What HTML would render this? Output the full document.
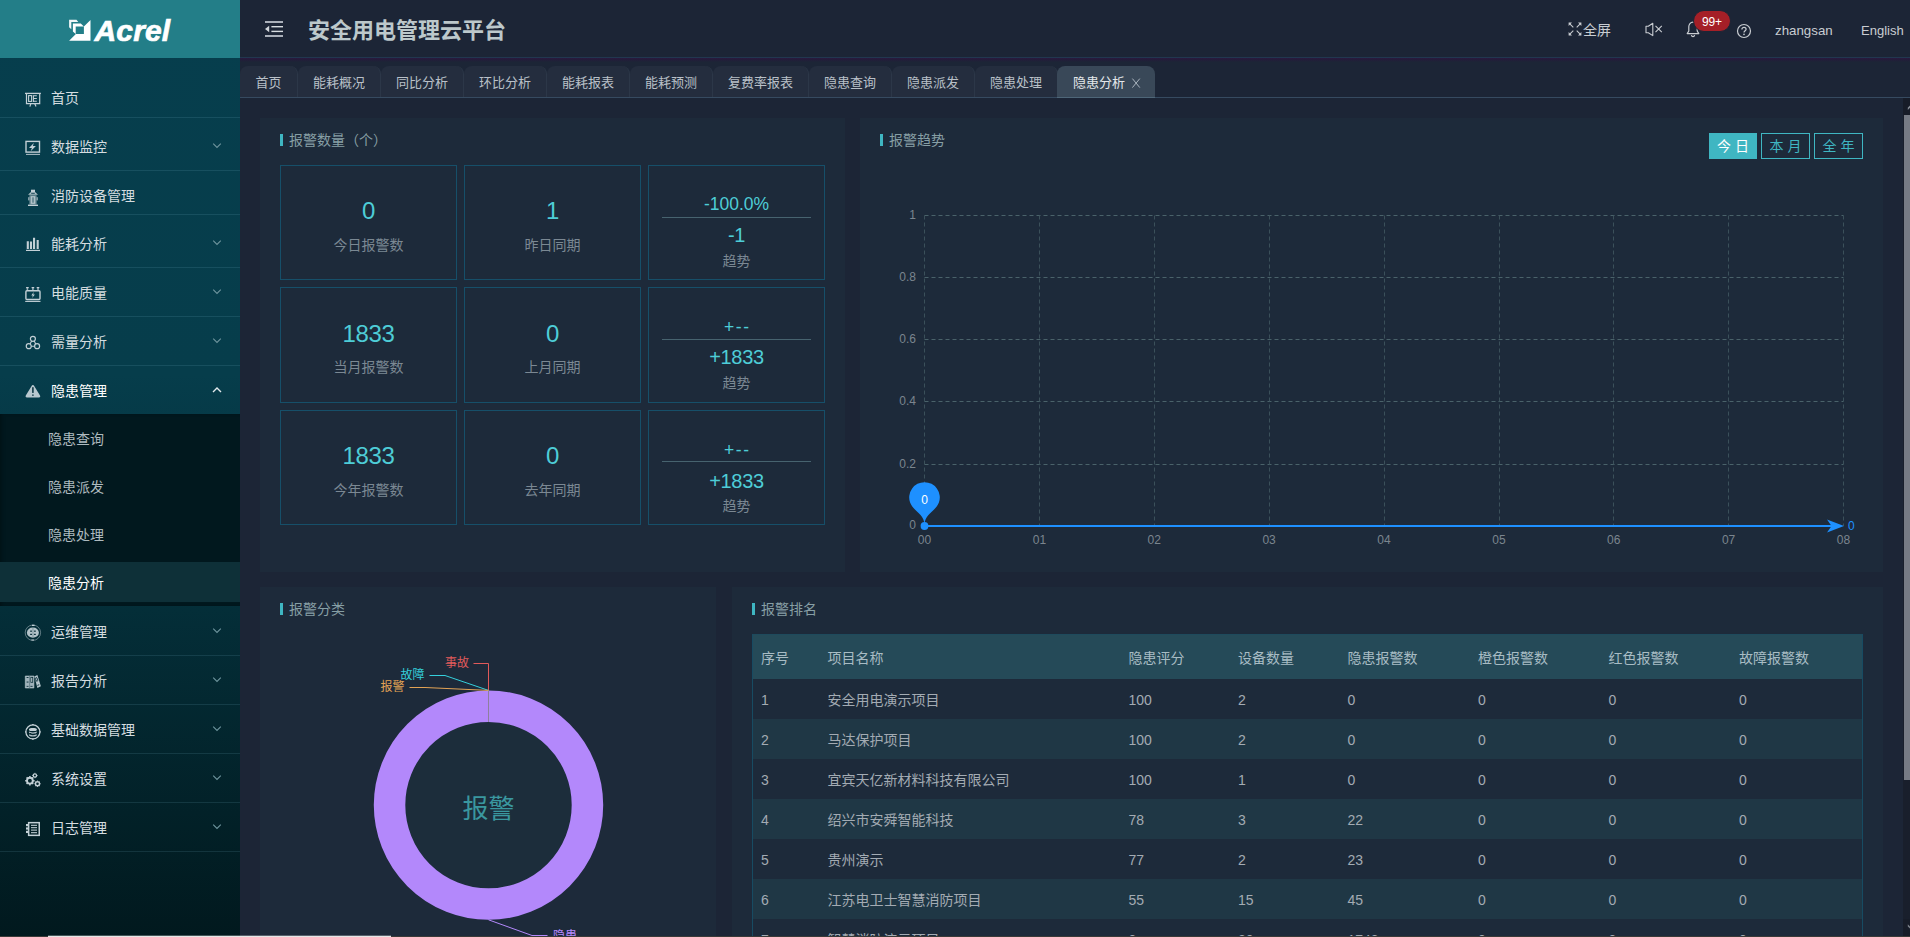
<!DOCTYPE html>
<html lang="zh-CN">
<head>
<meta charset="utf-8">
<title>安全用电管理云平台</title>
<style>
*{box-sizing:border-box;margin:0;padding:0}
html,body{width:1910px;height:937px;overflow:hidden;background:#1c2536}
body{position:relative;font-family:"Liberation Sans","Noto Sans CJK SC",sans-serif;font-size:14px;color:#c9ced4}
.abs{position:absolute}
svg{display:block}
#side{position:absolute;left:0;top:0;width:240px;height:937px;background:linear-gradient(#063e4d 0%,#063d4b 40%,#01191e 100%);overflow:hidden}
#logo{position:absolute;left:0;top:0;width:240px;height:58px;background:#237e88}
#logo .t{position:absolute;left:94.6px;top:13px;font:italic bold 30px/36px "Liberation Sans",sans-serif;color:#fff;letter-spacing:.1px;-webkit-text-stroke:.7px #fff}
.mi{position:absolute;left:0;width:240px;height:48px;line-height:48px;color:#d5dde0;font-size:14px;white-space:nowrap}
.mi .tx{position:absolute;left:51px;top:0}
.mi svg.ic{position:absolute;left:24px;top:15px;width:18px;height:18px}
.mi svg.ar{position:absolute;left:212px;top:20px;width:10px;height:7px}
.mi.on{color:#fff}
.ln{position:absolute;left:0;width:240px;height:1px;background:rgba(130,190,210,.14)}
#sub{position:absolute;left:0;top:414px;width:240px;height:192px;background:#01181e;box-shadow:inset 3px 0 4px -2px rgba(0,0,0,.35)}
.si{position:absolute;left:0;width:240px;padding-left:48px;height:48px;line-height:48px;color:#aebabf;font-size:14px}
#hd{position:absolute;left:240px;top:0;width:1670px;height:57px;background:#1c2536}
#hdl{position:absolute;left:240px;top:57px;width:1670px;height:1px;background:#21374f}
#hds{position:absolute;left:240px;top:58px;width:1670px;height:4px;background:linear-gradient(#2a1a40 0,#241b3a 35%,#1c2536 100%)}
#title{position:absolute;left:308px;top:14.5px;font-weight:bold;font-size:22px;line-height:32px;color:#bcc8cb;white-space:nowrap}
.hr{position:absolute;top:20px;line-height:20px;font-size:13px;color:#c9cdd2;white-space:nowrap}
.tab{position:absolute;top:66px;height:31px;line-height:34px;font-size:13px;color:#b9c0c8;background:#242d3e;border-radius:8px 8px 0 0;text-align:center;white-space:nowrap;border-right:1px solid #2c3748}
.tab.on{background:#394858;color:#e3e7ea;border-right:none;text-align:left;padding-left:16px}
#tabl{position:absolute;left:240px;top:97px;width:1670px;height:1px;background:#364a60}
.card{position:absolute;background:#1d2a3a}
.ct{position:absolute;font-size:14px;line-height:20px;color:#879fa5;white-space:nowrap;padding-left:9px}
.ct:before{content:"";position:absolute;left:0;top:4px;width:3px;height:12px;background:#3fb6c2}
.box{position:absolute;width:177px;height:115px;border:1px solid #164f69}
.num{position:absolute;left:0;width:100%;text-align:center;color:#4ecdd7;white-space:nowrap}
.lab{position:absolute;left:0;width:100%;text-align:center;color:#7b8893;font-size:14px;line-height:20px;white-space:nowrap}
.hl{position:absolute;left:13px;right:13px;height:1px;background:#47636f}
.btn{position:absolute;top:133px;height:26px;line-height:24px;border:1px solid #3fb6c2;color:#3fb6c2;font-size:14px;text-align:center;white-space:nowrap}
.btn.on{background:#3fb6c2;color:#fff}
#tb{position:absolute;left:752px;top:634px;width:1111px;height:303px;border-left:1px solid #174b62;border-right:1px solid #174b62;border-top:1px solid #1e4a5c;overflow:hidden}
.tr{position:absolute;left:0;width:1109px;height:40px;line-height:41px;color:#a3abb3;font-size:14px}
.tr.h{height:44px;line-height:46px;background:#254a58;color:#a8bcc4}
.tr.e{background:#1f3745}
.tr span{position:absolute;top:.6px;white-space:nowrap}
.tr.h span{top:-.4px}
</style>
</head>
<body>
<div id="side">
<div id="logo"><svg class="abs" style="left:69px;top:19px" width="22" height="23" viewBox="0 0 22 23"><path d="M0.1 0.7H7.5L9.3 2.9H2.3V10.3L0.1 8.3Z" fill="#fff" opacity=".93"/><path d="M3.9 4.5H11.8L14.9 7.4H6.7V14.9L3.9 12.4Z" fill="#fff"/><path d="M21.5 1V21.8H0.1L6.9 14.9H14.9V7.4Z" fill="#fff"/></svg><div class="t">Acrel</div></div>
<svg class="abs" style="left:24px;top:90px" width="18" height="19" viewBox="0 0 18 19"><path d="M1 3.4H16.9" stroke="#c3d0d6" stroke-width="1.3"/><path d="M2.5 3.4V13.6H15.7V3.4" fill="none" stroke="#c3d0d6" stroke-width="1.2"/><rect x="4.6" y="5.6" width="3" height="5.8" fill="none" stroke="#c3d0d6" stroke-width="1.1"/><path d="M9.4 5.2V11.9M9.4 5.7H12.8M9.4 8.5H12.8M9.4 11.3H12.8" stroke="#c3d0d6" stroke-width="1.1" fill="none"/><path d="M6.8 13.6L5.9 16.6M10.7 13.6L12 16.6" stroke="#c3d0d6" stroke-width="1.2"/></svg><div class="mi" style="top:74.2px"><span class="tx">首页</span></div>
<svg class="abs" style="left:24px;top:139px" width="18" height="19" viewBox="0 0 18 19"><rect x="2" y="2.4" width="13.5" height="10.7" fill="none" stroke="#c3d0d6" stroke-width="1.4"/><path d="M2 15.4H16" stroke="#c3d0d6" stroke-width="1.1" opacity=".85"/><path d="M9.8 3.9L5 8.9H7.9L6.7 12.3L11.9 7H8.9Z" fill="#c3d0d6"/></svg><div class="mi" style="top:122.9px"><span class="tx">数据监控</span></div><svg class="abs" style="left:212px;top:142px" width="10" height="8" viewBox="0 0 10 8"><path d="M1.2 1.6L5 5.4L8.8 1.6" fill="none" stroke="#6f959e" stroke-width="1.1"/></svg>
<svg class="abs" style="left:24px;top:188px" width="18" height="19" viewBox="0 0 18 19"><path d="M7 1.7H11V4H7Z" fill="#c3d0d6"/><path d="M4 6.8L7.2 3.7H10.8L14 6.8Z" fill="#c3d0d6" opacity=".9"/><path d="M7.2 5.3H10.8" stroke="#06384a" stroke-width="0.9"/><rect x="5.4" y="7.2" width="7.2" height="9.3" fill="#c3d0d6" opacity=".55"/><rect x="7.3" y="8.8" width="3.4" height="6.4" fill="none" stroke="#c3d0d6" stroke-width="0.9"/><rect x="4" y="16.6" width="10" height="1.4" fill="#c3d0d6"/><rect x="4.2" y="9.2" width="1.2" height="3.2" fill="#c3d0d6" opacity=".8"/><rect x="12.6" y="9.2" width="1.2" height="3.2" fill="#c3d0d6" opacity=".8"/></svg><div class="mi" style="top:171.8px"><span class="tx">消防设备管理</span></div>
<svg class="abs" style="left:24px;top:235px" width="18" height="19" viewBox="0 0 18 19"><path d="M3.8 6.2V14M7 6.4V14M10.05 2.8V14M13.7 5.1V14" stroke="#c3d0d6" stroke-width="2.1" fill="none"/><path d="M2 15.4H16" stroke="#c3d0d6" stroke-width="1.2"/></svg><div class="mi" style="top:219.8px"><span class="tx">能耗分析</span></div><svg class="abs" style="left:212px;top:239px" width="10" height="8" viewBox="0 0 10 8"><path d="M1.2 1.6L5 5.4L8.8 1.6" fill="none" stroke="#6f959e" stroke-width="1.1"/></svg>
<svg class="abs" style="left:24px;top:284px" width="18" height="19" viewBox="0 0 18 19"><rect x="1.9" y="6.8" width="14.1" height="8.7" rx="1" fill="none" stroke="#c3d0d6" stroke-width="1.4"/><path d="M3.4 3.6V6.4M8.9 3.6V6.4M14 3.6V6.4" stroke="#c3d0d6" stroke-width="1.5" opacity=".75"/><path d="M2.1 3.6H4.7M7.6 3.6H10.2M12.7 3.6H15.3" stroke="#c3d0d6" stroke-width="1.1"/><path d="M1.2 17.4H16.5" stroke="#c3d0d6" stroke-width="1.1"/><path d="M9.7 8.1L7.3 11.4H8.9L8.1 13.9L10.9 10.4H9.2Z" fill="#c3d0d6"/></svg><div class="mi" style="top:268.7px"><span class="tx">电能质量</span></div><svg class="abs" style="left:212px;top:288px" width="10" height="8" viewBox="0 0 10 8"><path d="M1.2 1.6L5 5.4L8.8 1.6" fill="none" stroke="#6f959e" stroke-width="1.1"/></svg>
<svg class="abs" style="left:24px;top:333px" width="18" height="19" viewBox="0 0 18 19"><circle cx="8.9" cy="5.8" r="2.5" fill="none" stroke="#c3d0d6" stroke-width="1.2"/><circle cx="4.75" cy="13.2" r="2.5" fill="none" stroke="#c3d0d6" stroke-width="1.2"/><circle cx="13.1" cy="13.2" r="2.5" fill="none" stroke="#c3d0d6" stroke-width="1.2"/><path d="M7.6 8L6.1 10.9M10.2 8L11.7 10.9M7.3 13.2H10.6" stroke="#c3d0d6" stroke-width="1.1"/></svg><div class="mi" style="top:318.2px"><span class="tx">需量分析</span></div><svg class="abs" style="left:212px;top:337px" width="10" height="8" viewBox="0 0 10 8"><path d="M1.2 1.6L5 5.4L8.8 1.6" fill="none" stroke="#6f959e" stroke-width="1.1"/></svg>
<svg class="abs" style="left:24px;top:382px" width="18" height="19" viewBox="0 0 18 19"><path d="M8.9 3C9.5 3 9.9 3.4 10.2 3.9L16 13.6C16.6 14.6 16 15.6 15 15.6H2.9C1.8 15.6 1.3 14.6 1.8 13.6L7.6 3.9C7.9 3.4 8.3 3 8.9 3Z" fill="#b9c8cf"/><rect x="8.15" y="5.2" width="1.5" height="5.7" fill="#06303d"/><rect x="8.15" y="12.5" width="1.5" height="1.3" fill="#06303d"/></svg><div class="mi on" style="top:367.2px"><span class="tx">隐患管理</span></div><svg class="abs" style="left:212px;top:386px" width="10" height="8" viewBox="0 0 10 8"><path d="M1 6L5 2L9 6" fill="none" stroke="#e3eaed" stroke-width="1.4"/></svg>
<svg class="abs" style="left:24px;top:624px" width="18" height="19" viewBox="0 0 18 19"><circle cx="8.9" cy="8.7" r="7.7" fill="none" stroke="#c3d0d6" stroke-width="0.8" opacity=".6"/><ellipse cx="8.9" cy="8.7" rx="6" ry="5.1" fill="#c3d0d6" opacity=".92"/><path d="M8 1.4H10.6M7.4 16H10" stroke="#c3d0d6" stroke-width="1.2"/><rect x="6.1" y="6.6" width="1.9" height="1.1" fill="#032a35"/><rect x="9.9" y="6.6" width="1.9" height="1.1" fill="#032a35"/><rect x="6.1" y="9.8" width="1.9" height="1.1" fill="#032a35"/><rect x="9.9" y="9.8" width="1.9" height="1.1" fill="#032a35"/><path d="M8.95 4V13.4" stroke="#7d959e" stroke-width="0.9"/></svg><div class="mi" style="top:607.8px"><span class="tx">运维管理</span></div><svg class="abs" style="left:212px;top:627px" width="10" height="8" viewBox="0 0 10 8"><path d="M1.2 1.6L5 5.4L8.8 1.6" fill="none" stroke="#6f959e" stroke-width="1.1"/></svg>
<svg class="abs" style="left:24px;top:672px" width="18" height="19" viewBox="0 0 18 19"><rect x="1.3" y="4" width="8.6" height="12" fill="#9fb2ba"/><path d="M1.3 4H9.9M1.3 4V16M9.9 4V16M1.3 16H9.9" stroke="#c3d0d6" stroke-width="0.7" opacity=".8"/><path d="M5.6 4V16" stroke="#5f7882" stroke-width="0.8"/><rect x="2.6" y="5.1" width="1.9" height="0.9" fill="#032a35"/><rect x="2.6" y="9.6" width="1.9" height="0.9" fill="#032a35"/><rect x="2.6" y="13.9" width="1.9" height="0.8" fill="#032a35"/><rect x="6.4" y="13.9" width="2.2" height="0.8" fill="#032a35"/><rect x="6.9" y="5.3" width="1.8" height="5" fill="#dfe8ec" stroke="#032a35" stroke-width="0.8"/><path d="M10.4 4.6L13.4 3.1L16.9 14.2L13.4 15.9Z" fill="#b5c5cc"/><ellipse cx="12.6" cy="7.4" rx="0.9" ry="2" fill="none" stroke="#032a35" stroke-width="0.8" transform="rotate(-17 12.6 7.4)"/><path d="M13.4 13.4L15.2 12.7" stroke="#032a35" stroke-width="0.9"/></svg><div class="mi" style="top:657.0px"><span class="tx">报告分析</span></div><svg class="abs" style="left:212px;top:676px" width="10" height="8" viewBox="0 0 10 8"><path d="M1.2 1.6L5 5.4L8.8 1.6" fill="none" stroke="#6f959e" stroke-width="1.1"/></svg>
<svg class="abs" style="left:24px;top:723px" width="18" height="19" viewBox="0 0 18 19"><circle cx="8.9" cy="8.9" r="7" fill="none" stroke="#c3d0d6" stroke-width="1.3"/><path d="M8.9 1.1V2.2M8.9 15.6V16.7M1.1 8.9H2.2M15.6 8.9H16.7" stroke="#c3d0d6" stroke-width="1.4"/><path d="M5 6.1C5 4.5 12.8 4.5 12.8 6.1V6.9C12.8 8.5 5 8.5 5 6.9Z" fill="#c3d0d6"/><path d="M5 8.6C6 9.7 11.8 9.7 12.8 8.6V9.6C12.8 11.2 5 11.2 5 9.6Z" fill="#c3d0d6" opacity=".9"/><path d="M5 11.3C6 12.4 11.8 12.4 12.8 11.3V12.2C12.8 13.9 5 13.9 5 12.2Z" fill="#c3d0d6" opacity=".9"/></svg><div class="mi" style="top:706.0px"><span class="tx">基础数据管理</span></div><svg class="abs" style="left:212px;top:725px" width="10" height="8" viewBox="0 0 10 8"><path d="M1.2 1.6L5 5.4L8.8 1.6" fill="none" stroke="#6f959e" stroke-width="1.1"/></svg>
<svg class="abs" style="left:24px;top:771px" width="18" height="19" viewBox="0 0 18 19"><circle cx="5.9" cy="9.7" r="2.9" fill="none" stroke="#c3d0d6" stroke-width="1.9"/><path d="M5.9 5V14.4M1.2 9.7H10.6M2.6 6.4L9.2 13M9.2 6.4L2.6 13" stroke="#c3d0d6" stroke-width="1.5" stroke-dasharray="1.5 6.4"/><circle cx="10.9" cy="4.5" r="1.65" fill="none" stroke="#c3d0d6" stroke-width="1.3"/><path d="M10.9 1.8V7.2M8.2 4.5H13.6" stroke="#c3d0d6" stroke-width="1" stroke-dasharray="0.8 3.8" opacity=".8"/><circle cx="13.5" cy="12.8" r="2" fill="none" stroke="#c3d0d6" stroke-width="1.4"/><path d="M13.5 9.6V16M10.3 12.8H16.7M11.3 10.6L15.7 15M15.7 10.6L11.3 15" stroke="#c3d0d6" stroke-width="1.1" stroke-dasharray="0.9 4.6" opacity=".85"/></svg><div class="mi" style="top:755.0px"><span class="tx">系统设置</span></div><svg class="abs" style="left:212px;top:774px" width="10" height="8" viewBox="0 0 10 8"><path d="M1.2 1.6L5 5.4L8.8 1.6" fill="none" stroke="#6f959e" stroke-width="1.1"/></svg>
<svg class="abs" style="left:24px;top:820px" width="18" height="19" viewBox="0 0 18 19"><rect x="4.65" y="2.65" width="10.6" height="12.7" fill="none" stroke="#c3d0d6" stroke-width="1.5"/><path d="M7 5.4H13M7 7.6H13M7 10.1H13M7 12.6H13" stroke="#c3d0d6" stroke-width="1.1" opacity=".85"/><rect x="2" y="4" width="2" height="2.2" fill="#c3d0d6"/><rect x="2" y="7.4" width="2" height="2.2" fill="#c3d0d6"/><rect x="2" y="10.8" width="2" height="2.2" fill="#c3d0d6"/></svg><div class="mi" style="top:804.2px"><span class="tx">日志管理</span></div><svg class="abs" style="left:212px;top:823px" width="10" height="8" viewBox="0 0 10 8"><path d="M1.2 1.6L5 5.4L8.8 1.6" fill="none" stroke="#6f959e" stroke-width="1.1"/></svg>
<div class="ln" style="top:117px"></div><div class="ln" style="top:170px"></div><div class="ln" style="top:214px"></div><div class="ln" style="top:267px"></div><div class="ln" style="top:316px"></div><div class="ln" style="top:365px"></div><div class="ln" style="top:655px"></div><div class="ln" style="top:704px"></div><div class="ln" style="top:753px"></div><div class="ln" style="top:802px"></div><div class="ln" style="top:851px"></div>
<div id="sub"><div class="abs" style="left:0;top:148px;width:240px;height:40px;background:#0e3038"></div><div class="si" style="top:0.8px">隐患查询</div><div class="si" style="top:48.9px">隐患派发</div><div class="si" style="top:97.0px">隐患处理</div><div class="si" style="top:145.2px;color:#fff">隐患分析</div></div>
</div>
<div id="hd"></div><div id="hdl"></div><div id="hds"></div>
<svg class="abs" style="left:264px;top:20px" width="20" height="18" viewBox="0 0 20 18"><rect x="1" y="1" width="18" height="2" fill="#aab0ba"/><rect x="1" y="15" width="18" height="2" fill="#aab0ba"/><rect x="7.4" y="6" width="11.6" height="1.4" fill="#d7dce1"/><rect x="7.4" y="10.7" width="11.6" height="1.4" fill="#d7dce1"/><path d="M1 9L5.2 5.8V12.2Z" fill="#d0d5da"/></svg><div id="title">安全用电管理云平台</div>
<svg class="abs" style="left:1568px;top:22px" width="14" height="14" viewBox="-7 -7 14 14"><path d="M1.7 1.7L5.2 5.2" stroke="#c9cdd2" stroke-width="1.1"/><path d="M6.4 6.4L6.4 3.0L3.0 6.4Z" fill="#c9cdd2"/><path d="M1.7 -1.7L5.2 -5.2" stroke="#c9cdd2" stroke-width="1.1"/><path d="M6.4 -6.4L6.4 -3.0L3.0 -6.4Z" fill="#c9cdd2"/><path d="M-1.7 1.7L-5.2 5.2" stroke="#c9cdd2" stroke-width="1.1"/><path d="M-6.4 6.4L-6.4 3.0L-3.0 6.4Z" fill="#c9cdd2"/><path d="M-1.7 -1.7L-5.2 -5.2" stroke="#c9cdd2" stroke-width="1.1"/><path d="M-6.4 -6.4L-6.4 -3.0L-3.0 -6.4Z" fill="#c9cdd2"/></svg><div class="hr" style="left:1583px;font-size:14px">全屏</div><svg class="abs" style="left:1645px;top:22px" width="18" height="15" viewBox="1645 22 18 15"><path d="M1646 26.3H1648.3L1652.8 23.3V35.6L1648.3 32.7H1646Z" fill="none" stroke="#c9cdd2" stroke-width="1.1" stroke-linejoin="round"/><path d="M1655.5 25.8L1661.8 32.1M1661.8 25.8L1655.5 32.1" stroke="#c9cdd2" stroke-width="1.1"/></svg><svg class="abs" style="left:1686px;top:21px" width="14" height="17" viewBox="0 0 14 17"><path d="M7 1.2C4.4 1.2 2.8 3.2 2.8 5.8V10L1.2 12.6H12.8L11.2 10V5.8C11.2 3.2 9.6 1.2 7 1.2Z" fill="none" stroke="#c9cdd2" stroke-width="1.2" stroke-linejoin="round"/><path d="M5.4 14.2C5.6 15.2 6.2 15.7 7 15.7S8.4 15.2 8.6 14.2" fill="none" stroke="#c9cdd2" stroke-width="1.2"/></svg><div class="abs" style="left:1693px;top:10px;width:38px;height:22px;border-radius:11px;background:#a51f27;border:1px solid #1c2536;color:#fff;font-size:12px;line-height:22.4px;text-align:center;letter-spacing:-.2px">99+</div><svg class="abs" style="left:1736px;top:23px" width="16" height="16" viewBox="0 0 16 16"><circle cx="8" cy="8" r="6.5" fill="none" stroke="#c9cdd2" stroke-width="1.2"/><path d="M5.9 6.4C5.9 5.2 6.8 4.4 8 4.4S10.1 5.2 10.1 6.3C10.1 7.6 8 7.8 8 9.4" fill="none" stroke="#c9cdd2" stroke-width="1.2"/><circle cx="8" cy="11.4" r="0.8" fill="#c9cdd2"/></svg><div class="hr" style="left:1775px;top:20.7px;font-size:13.3px">zhangsan</div><div class="hr" style="left:1861px;top:20.7px;font-size:13px">English</div>
<div class="tab" style="left:240px;width:58px">首页</div><div class="tab" style="left:298px;width:83px">能耗概况</div><div class="tab" style="left:381px;width:83px">同比分析</div><div class="tab" style="left:464px;width:83px">环比分析</div><div class="tab" style="left:547px;width:83px">能耗报表</div><div class="tab" style="left:630px;width:83px">能耗预测</div><div class="tab" style="left:713px;width:96px">复费率报表</div><div class="tab" style="left:809px;width:83px">隐患查询</div><div class="tab" style="left:892px;width:83px">隐患派发</div><div class="tab" style="left:975px;width:83px">隐患处理</div><div class="tab on" style="left:1057px;width:98px">隐患分析<svg class="abs" style="left:74px;top:12px" width="10" height="11" viewBox="0 0 10 11"><path d="M1.4 0.6L8.8 9.6M8.8 0.6L1.4 9.6" stroke="#aab4be" stroke-width="1"/></svg></div>
<div id="tabl"></div><div class="abs" style="left:1057px;top:97px;width:98px;height:1px;background:#4e6678"></div>
<div class="card" style="left:260px;top:118px;width:585px;height:454px"></div>
<div class="ct" style="left:280px;top:130px">报警数量（个）</div>
<div class="box" style="left:280px;top:165px;height:115px"><div class="num" style="top:28.7px;font-size:24px;line-height:32px;letter-spacing:-.4px">0</div><div class="lab" style="top:68.5px">今日报警数</div></div><div class="box" style="left:464px;top:165px;height:115px"><div class="num" style="top:28.7px;font-size:24px;line-height:32px;letter-spacing:-.4px">1</div><div class="lab" style="top:68.5px">昨日同期</div></div><div class="box" style="left:648px;top:165px;height:115px"><div class="num" style="top:25.5px;font-size:17.5px;line-height:24px">-100.0%</div><div class="hl" style="top:51px"></div><div class="num" style="top:56.4px;font-size:20px;line-height:26px;letter-spacing:-.3px">-1</div><div class="lab" style="top:85px">趋势</div></div>
<div class="box" style="left:280px;top:287px;height:116px"><div class="num" style="top:29.8px;font-size:24px;line-height:32px;letter-spacing:-.4px">1833</div><div class="lab" style="top:68.5px">当月报警数</div></div><div class="box" style="left:464px;top:287px;height:116px"><div class="num" style="top:29.8px;font-size:24px;line-height:32px;letter-spacing:-.4px">0</div><div class="lab" style="top:68.5px">上月同期</div></div><div class="box" style="left:648px;top:287px;height:116px"><div class="num" style="top:27.3px;font-size:17.5px;line-height:24px;letter-spacing:1.6px;padding-left:1.6px">+--</div><div class="hl" style="top:51px"></div><div class="num" style="top:56.4px;font-size:20px;line-height:26px;letter-spacing:-.3px">+1833</div><div class="lab" style="top:85px">趋势</div></div>
<div class="box" style="left:280px;top:410px;height:115px"><div class="num" style="top:28.8px;font-size:24px;line-height:32px;letter-spacing:-.4px">1833</div><div class="lab" style="top:68.5px">今年报警数</div></div><div class="box" style="left:464px;top:410px;height:115px"><div class="num" style="top:28.8px;font-size:24px;line-height:32px;letter-spacing:-.4px">0</div><div class="lab" style="top:68.5px">去年同期</div></div><div class="box" style="left:648px;top:410px;height:115px"><div class="num" style="top:26.5px;font-size:17.5px;line-height:24px;letter-spacing:1.6px;padding-left:1.6px">+--</div><div class="hl" style="top:50px"></div><div class="num" style="top:56.6px;font-size:20px;line-height:26px;letter-spacing:-.3px">+1833</div><div class="lab" style="top:85px">趋势</div></div>
<div class="card" style="left:860px;top:118px;width:1023px;height:454px"></div>
<div class="ct" style="left:880px;top:130px">报警趋势</div>
<div class="btn on" style="left:1709px;width:48px">今 日</div><div class="btn" style="left:1761px;width:49px">本 月</div><div class="btn" style="left:1814px;width:49px">全 年</div>
<svg class="abs" style="left:860px;top:118px" width="1023" height="454" viewBox="860 118 1023 454" font-family="Liberation Sans, Noto Sans CJK SC, sans-serif"><path d="M924.5 215.5H1843.5" stroke="#4a626a" stroke-width="1" stroke-dasharray="4 3" fill="none"/><path d="M924.5 277.5H1843.5" stroke="#4a626a" stroke-width="1" stroke-dasharray="4 3" fill="none"/><path d="M924.5 339.5H1843.5" stroke="#4a626a" stroke-width="1" stroke-dasharray="4 3" fill="none"/><path d="M924.5 401.5H1843.5" stroke="#4a626a" stroke-width="1" stroke-dasharray="4 3" fill="none"/><path d="M924.5 464.5H1843.5" stroke="#4a626a" stroke-width="1" stroke-dasharray="4 3" fill="none"/><path d="M924.5 215.5V526" stroke="#3b505a" stroke-width="1" stroke-dasharray="4 3" fill="none"/><path d="M1039.5 215.5V526" stroke="#3b505a" stroke-width="1" stroke-dasharray="4 3" fill="none"/><path d="M1154.5 215.5V526" stroke="#3b505a" stroke-width="1" stroke-dasharray="4 3" fill="none"/><path d="M1269.5 215.5V526" stroke="#3b505a" stroke-width="1" stroke-dasharray="4 3" fill="none"/><path d="M1384.5 215.5V526" stroke="#3b505a" stroke-width="1" stroke-dasharray="4 3" fill="none"/><path d="M1499.5 215.5V526" stroke="#3b505a" stroke-width="1" stroke-dasharray="4 3" fill="none"/><path d="M1613.5 215.5V526" stroke="#3b505a" stroke-width="1" stroke-dasharray="4 3" fill="none"/><path d="M1728.5 215.5V526" stroke="#3b505a" stroke-width="1" stroke-dasharray="4 3" fill="none"/><path d="M1843.5 215.5V526" stroke="#3b505a" stroke-width="1" stroke-dasharray="4 3" fill="none"/><text x="916" y="218.7" text-anchor="end" font-size="12" fill="#7b858e">1</text><text x="916" y="280.7" text-anchor="end" font-size="12" fill="#7b858e">0.8</text><text x="916" y="342.7" text-anchor="end" font-size="12" fill="#7b858e">0.6</text><text x="916" y="404.7" text-anchor="end" font-size="12" fill="#7b858e">0.4</text><text x="916" y="467.7" text-anchor="end" font-size="12" fill="#7b858e">0.2</text><text x="916" y="529.2" text-anchor="end" font-size="12" fill="#7b858e">0</text><text x="924.5" y="544" text-anchor="middle" font-size="12" fill="#7b858e">00</text><text x="1039.4" y="544" text-anchor="middle" font-size="12" fill="#7b858e">01</text><text x="1154.2" y="544" text-anchor="middle" font-size="12" fill="#7b858e">02</text><text x="1269.1" y="544" text-anchor="middle" font-size="12" fill="#7b858e">03</text><text x="1384.0" y="544" text-anchor="middle" font-size="12" fill="#7b858e">04</text><text x="1498.9" y="544" text-anchor="middle" font-size="12" fill="#7b858e">05</text><text x="1613.8" y="544" text-anchor="middle" font-size="12" fill="#7b858e">06</text><text x="1728.6" y="544" text-anchor="middle" font-size="12" fill="#7b858e">07</text><text x="1843.5" y="544" text-anchor="middle" font-size="12" fill="#7b858e">08</text><path d="M924.5 526H1834" stroke="#1e90ff" stroke-width="2" fill="none"/><circle cx="924.5" cy="526" r="3.9" fill="#1e90ff"/><path d="M1844 526L1827 519.5L1831.5 526L1827 532.5Z" fill="#1e90ff"/><text x="1848" y="530" font-size="12" fill="#1e90ff">0</text><path d="M924.5 524.5C924.2 514 913 511 910.1 502.6A15.3 15.3 0 1 1 938.9 502.6C936 511 924.8 514 924.5 524.5Z" fill="#1e90ff"/><text x="924.5" y="504.2" text-anchor="middle" font-size="12" fill="#fff">0</text></svg>
<div class="card" style="left:260px;top:587px;width:456px;height:350px"></div>
<div class="ct" style="left:280px;top:599px">报警分类</div>
<svg class="abs" style="left:260px;top:587px" width="456" height="350" viewBox="260 587 456 350" font-family="Liberation Sans, Noto Sans CJK SC, sans-serif"><circle cx="488.5" cy="805.1" r="98.95" fill="#1c2d3b" stroke="#b388fb" stroke-width="31.5"/><path d="M488.5 690.4V722" stroke="#8d7f9e" stroke-width="1"/><path d="M473.5 663.5H488.5V690.4" stroke="#e05a5a" stroke-width="1" fill="none"/><path d="M429.5 675.5H445L488.5 690.4" stroke="#35d0dc" stroke-width="1" fill="none"/><path d="M409.5 687.5H425L488.5 690.4" stroke="#e3a355" stroke-width="1" fill="none"/><text x="445" y="666.7" font-size="12" fill="#e05a5a">事故</text><text x="400.5" y="678.7" font-size="12" fill="#35d0dc">故障</text><text x="380.5" y="691" font-size="12" fill="#e3a355">报警</text><path d="M488.5 919.8L532 935.5H547.5" stroke="#b388fb" stroke-width="1" fill="none"/><text x="553" y="939.5" font-size="12" fill="#b388fb">隐患</text><text x="488.5" y="817.5" text-anchor="middle" font-size="26" fill="#3a979f">报警</text></svg>
<div class="card" style="left:732px;top:587px;width:1151px;height:350px"></div>
<div class="ct" style="left:752px;top:599px">报警排名</div>
<div id="tb"><div class="tr h" style="top:0px"><span style="left:8.0px">序号</span><span style="left:74.5px">项目名称</span><span style="left:375.5px">隐患评分</span><span style="left:485.0px">设备数量</span><span style="left:594.5px">隐患报警数</span><span style="left:725.0px">橙色报警数</span><span style="left:855.5px">红色报警数</span><span style="left:986.0px">故障报警数</span></div><div class="tr " style="top:44px"><span style="left:8.0px">1</span><span style="left:74.5px">安全用电演示项目</span><span style="left:375.5px">100</span><span style="left:485.0px">2</span><span style="left:594.5px">0</span><span style="left:725.0px">0</span><span style="left:855.5px">0</span><span style="left:986.0px">0</span></div><div class="tr e" style="top:84px"><span style="left:8.0px">2</span><span style="left:74.5px">马达保护项目</span><span style="left:375.5px">100</span><span style="left:485.0px">2</span><span style="left:594.5px">0</span><span style="left:725.0px">0</span><span style="left:855.5px">0</span><span style="left:986.0px">0</span></div><div class="tr " style="top:124px"><span style="left:8.0px">3</span><span style="left:74.5px">宜宾天亿新材料科技有限公司</span><span style="left:375.5px">100</span><span style="left:485.0px">1</span><span style="left:594.5px">0</span><span style="left:725.0px">0</span><span style="left:855.5px">0</span><span style="left:986.0px">0</span></div><div class="tr e" style="top:164px"><span style="left:8.0px">4</span><span style="left:74.5px">绍兴市安舜智能科技</span><span style="left:375.5px">78</span><span style="left:485.0px">3</span><span style="left:594.5px">22</span><span style="left:725.0px">0</span><span style="left:855.5px">0</span><span style="left:986.0px">0</span></div><div class="tr " style="top:204px"><span style="left:8.0px">5</span><span style="left:74.5px">贵州演示</span><span style="left:375.5px">77</span><span style="left:485.0px">2</span><span style="left:594.5px">23</span><span style="left:725.0px">0</span><span style="left:855.5px">0</span><span style="left:986.0px">0</span></div><div class="tr e" style="top:244px"><span style="left:8.0px">6</span><span style="left:74.5px">江苏电卫士智慧消防项目</span><span style="left:375.5px">55</span><span style="left:485.0px">15</span><span style="left:594.5px">45</span><span style="left:725.0px">0</span><span style="left:855.5px">0</span><span style="left:986.0px">0</span></div><div class="tr " style="top:284px"><span style="left:8.0px">7</span><span style="left:74.5px">智慧消防演示项目</span><span style="left:375.5px">0</span><span style="left:485.0px">20</span><span style="left:594.5px">1743</span><span style="left:725.0px">0</span><span style="left:855.5px">0</span><span style="left:986.0px">0</span></div></div>
<div class="abs" style="left:1903px;top:98px;width:7px;height:839px;background:#191f2c"></div><div class="abs" style="left:1903px;top:98px;width:7px;height:17px;background:#171c28"></div><div class="abs" style="left:1903px;top:919px;width:7px;height:18px;background:#171c28"></div><div class="abs" style="left:1904px;top:115px;width:6px;height:665px;background:#767b85"></div><svg class="abs" style="left:1905px;top:103px" width="5" height="10" viewBox="0 0 5 10"><path d="M5 2.6L2.8 4.8V7L5 4.8Z" fill="#8a8f98"/></svg><svg class="abs" style="left:1905px;top:922px" width="5" height="10" viewBox="0 0 5 10"><path d="M2.8 2.2L5 4.4V6.6L2.8 4.4Z" fill="#7d828b"/></svg><div class="abs" style="left:0;top:936px;width:1910px;height:1px;background:#3a3a38"></div><div class="abs" style="left:48px;top:935px;width:343px;height:1px;background:rgba(230,230,230,.3)"></div><div class="abs" style="left:48px;top:936px;width:343px;height:1px;background:#e6e6e6"></div>
</body>
</html>
